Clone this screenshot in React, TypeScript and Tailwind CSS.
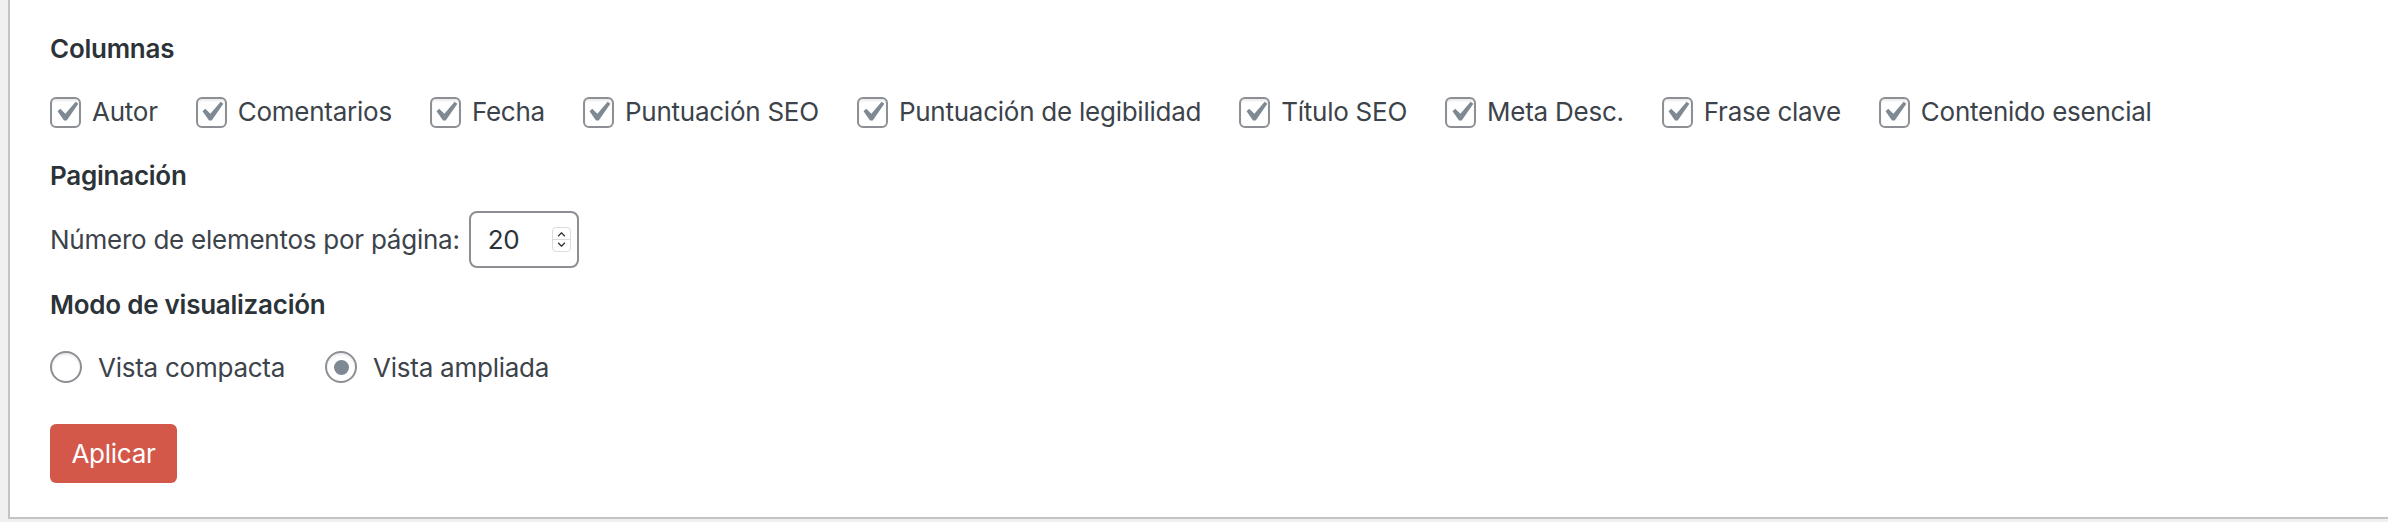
import React from "react";

const columns = [
  "Autor",
  "Comentarios",
  "Fecha",
  "Puntuación SEO",
  "Puntuación de legibilidad",
  "Título SEO",
  "Meta Desc.",
  "Frase clave",
  "Contenido esencial",
];

function CheckBox() {
  return (
    <span className="relative flex h-[31px] w-[31px] shrink-0 items-center justify-center rounded-[6px] border-2 border-[#8c8f94] bg-white shadow-[inset_0_2px_2px_rgba(0,0,0,0.08)]">
      <svg viewBox="0 0 20 20" className="absolute h-[40px] w-[40px]">
        <path d="M14.83 4.89l1.34.94-5.81 8.38H9.02L5.78 9.67l1.34-1.25 2.57 2.4z" fill="#7e8993" />
      </svg>
    </span>
  );
}

function Radio({ checked }: { checked?: boolean }) {
  return (
    <span className="flex h-[32px] w-[32px] shrink-0 items-center justify-center rounded-full border-2 border-[#8c8f94] bg-white shadow-[inset_0_2px_2px_rgba(0,0,0,0.08)]">
      {checked && <span className="h-[15px] w-[15px] rounded-full bg-[#7e8993]" />}
    </span>
  );
}

export default function App() {
  return (
    <div className="h-[522px] w-full bg-[#f0f0f1] pl-[8px] font-['Inter',sans-serif] text-[26px] tracking-[-0.25px] text-[#3c434a]">
      <div className="h-[519px] border-b-2 border-l-2 border-[#c3c4c7] bg-white pl-[40px] pt-[31px]">
        <h3 className="h-[36px] text-[26px] font-semibold leading-[36px] text-[#2c3338]">Columnas</h3>

        <div className="mt-[29px] flex h-[32px] items-center gap-[38px]">
          {columns.map((c) => (
            <label key={c} className="flex items-center gap-[11px]">
              <CheckBox />
              <span className="leading-[32px]">{c}</span>
            </label>
          ))}
        </div>

        <h3 className="mt-[30px] h-[36px] text-[26px] font-semibold leading-[36px] text-[#2c3338]">Paginación</h3>

        <div className="mt-[17px] flex h-[57px] items-center gap-[9px]">
          <span>Número de elementos por página:</span>
          <div className="flex h-[57px] w-[110px] items-center justify-between rounded-[8px] border-2 border-[#8c8f94] bg-white pl-[17px] pr-[6px] text-[#2c3338]">
            <span>20</span>
            <span className="flex h-[25px] w-[19px] flex-col items-center justify-center rounded-[4px] border border-[#dcdcde] bg-white">
              <svg viewBox="0 0 10 6" className="h-[5px] w-[9px]">
                <path d="M1 5 L5 1 L9 5" fill="none" stroke="#2c3338" strokeWidth="1.6" />
              </svg>
              <span className="my-[2px] h-px w-full bg-[#dcdcde]" />
              <svg viewBox="0 0 10 6" className="h-[5px] w-[9px]">
                <path d="M1 1 L5 5 L9 1" fill="none" stroke="#2c3338" strokeWidth="1.6" />
              </svg>
            </span>
          </div>
        </div>

        <h3 className="mt-[19px] h-[36px] text-[26px] font-semibold leading-[36px] text-[#2c3338]">Modo de visualización</h3>

        <div className="mt-[28px] flex h-[32px] items-center gap-[40px]">
          <label className="flex items-center gap-[16px]">
            <Radio />
            <span>Vista compacta</span>
          </label>
          <label className="flex items-center gap-[16px]">
            <Radio checked />
            <span>Vista ampliada</span>
          </label>
        </div>

        <button className="mt-[41px] flex h-[59px] w-[127px] items-center justify-center rounded-[6px] bg-[#d3584a] text-[26px] text-white">
          Aplicar
        </button>
      </div>
    </div>
  );
}
